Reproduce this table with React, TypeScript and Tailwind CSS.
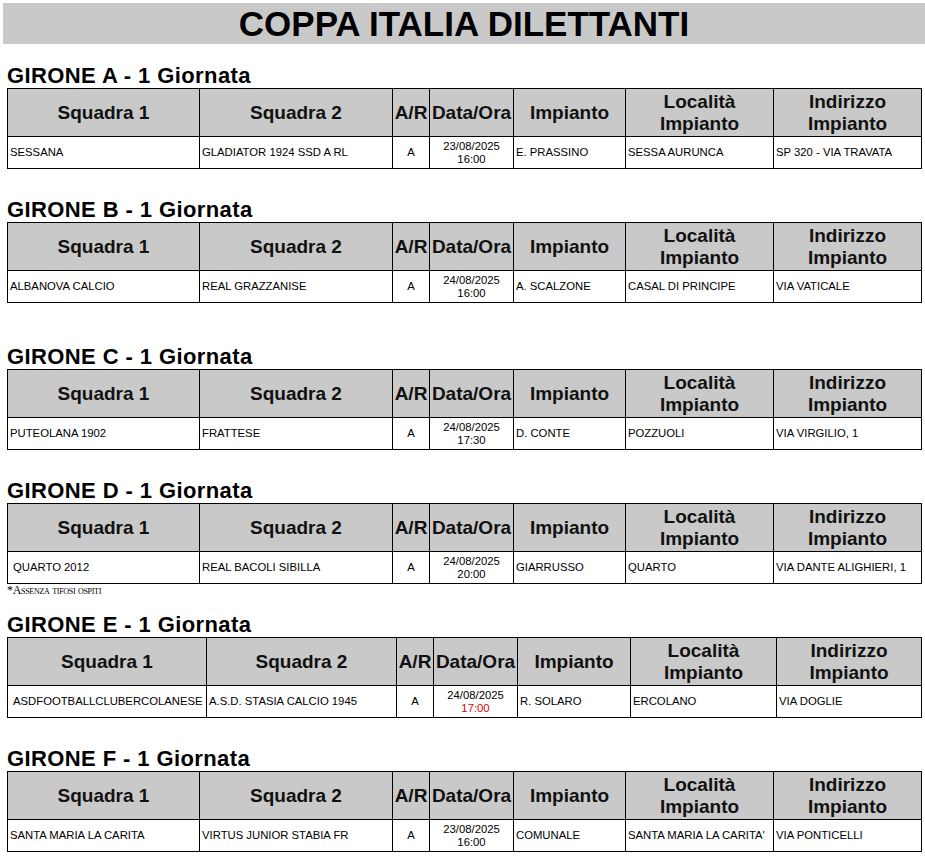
import React from "react";

type Match = {
  s1: string;
  s2: string;
  ar: string;
  date: string;
  time: string;
  imp: string;
  loc: string;
  ind: string;
};

type Girone = {
  name: string;
  cols: string;
  match: Match;
  firstPad: string;
  redTime?: boolean;
  note?: boolean;
  after: string;
};

const STD = "grid-cols-[192px_193px_37px_84px_112px_148px_148px]";
const WIDE = "grid-cols-[199px_190px_37px_84px_113px_146px_145px]";

const gironi: Girone[] = [
  {
    name: "GIRONE A - 1 Giornata",
    cols: STD,
    firstPad: "pl-[2px]",
    after: "mb-[29px]",
    match: {
      s1: "SESSANA",
      s2: "GLADIATOR 1924 SSD A RL",
      ar: "A",
      date: "23/08/2025",
      time: "16:00",
      imp: "E. PRASSINO",
      loc: "SESSA AURUNCA",
      ind: "SP 320 - VIA TRAVATA",
    },
  },
  {
    name: "GIRONE B - 1 Giornata",
    cols: STD,
    firstPad: "pl-[2px]",
    after: "mb-[42px]",
    match: {
      s1: "ALBANOVA CALCIO",
      s2: "REAL GRAZZANISE",
      ar: "A",
      date: "24/08/2025",
      time: "16:00",
      imp: "A. SCALZONE",
      loc: "CASAL DI PRINCIPE",
      ind: "VIA VATICALE",
    },
  },
  {
    name: "GIRONE C - 1 Giornata",
    cols: STD,
    firstPad: "pl-[2px]",
    after: "mb-[29px]",
    match: {
      s1: "PUTEOLANA 1902",
      s2: "FRATTESE",
      ar: "A",
      date: "24/08/2025",
      time: "17:30",
      imp: "D. CONTE",
      loc: "POZZUOLI",
      ind: "VIA VIRGILIO, 1",
    },
  },
  {
    name: "GIRONE D - 1 Giornata",
    cols: STD,
    firstPad: "pl-[5px]",
    note: true,
    after: "mb-[17px]",
    match: {
      s1: "QUARTO 2012",
      s2: "REAL BACOLI SIBILLA",
      ar: "A",
      date: "24/08/2025",
      time: "20:00",
      imp: "GIARRUSSO",
      loc: "QUARTO",
      ind: "VIA DANTE ALIGHIERI, 1",
    },
  },
  {
    name: "GIRONE E - 1 Giornata",
    cols: WIDE,
    firstPad: "pl-[5px]",
    redTime: true,
    after: "mb-[29px]",
    match: {
      s1: "ASDFOOTBALLCLUBERCOLANESE",
      s2: "A.S.D. STASIA CALCIO 1945",
      ar: "A",
      date: "24/08/2025",
      time: "17:00",
      imp: "R. SOLARO",
      loc: "ERCOLANO",
      ind: "VIA DOGLIE",
    },
  },
  {
    name: "GIRONE F - 1 Giornata",
    cols: STD,
    firstPad: "pl-[2px]",
    after: "mb-0",
    match: {
      s1: "SANTA MARIA LA CARITA",
      s2: "VIRTUS JUNIOR STABIA FR",
      ar: "A",
      date: "23/08/2025",
      time: "16:00",
      imp: "COMUNALE",
      loc: "SANTA MARIA LA CARITA'",
      ind: "VIA PONTICELLI",
    },
  },
];

const headCell =
  "h-[48px] border-r border-b border-black bg-[#c9c9c9] flex items-center justify-center text-center text-[19px] font-bold leading-[22px] text-[#111]";
const bodyCell =
  "h-[32px] border-r border-b border-black flex items-center text-[11.3px] leading-[13px] text-black whitespace-nowrap overflow-hidden";

function GironeTable({ g }: { g: Girone }) {
  const m = g.match;
  return (
    <div className={g.after}>
      <h2 className="h-[24px] pl-[7px] text-[22px] font-bold leading-[24px] tracking-[0.4px] text-black">
        {g.name}
      </h2>
      <div className={`ml-[7px] w-[915px] grid border-l border-t border-black ${g.cols}`}>
        <div className={headCell}>Squadra 1</div>
        <div className={headCell}>Squadra 2</div>
        <div className={headCell}>A/R</div>
        <div className={headCell}>Data/Ora</div>
        <div className={headCell}>Impianto</div>
        <div className={headCell}>
          Località
          <br />
          Impianto
        </div>
        <div className={headCell}>
          Indirizzo
          <br />
          Impianto
        </div>

        <div className={`${bodyCell} ${g.firstPad}`}>{m.s1}</div>
        <div className={`${bodyCell} pl-[2px]`}>{m.s2}</div>
        <div className={`${bodyCell} justify-center`}>{m.ar}</div>
        <div className={`${bodyCell} flex-col justify-center text-center`}>
          <span>{m.date}</span>
          <span className={g.redTime ? "text-[#e00000]" : ""}>{m.time}</span>
        </div>
        <div className={`${bodyCell} pl-[2px]`}>{m.imp}</div>
        <div className={`${bodyCell} pl-[2px]`}>{m.loc}</div>
        <div className={`${bodyCell} pl-[2px]`}>{m.ind}</div>
      </div>
      {g.note && (
        <div className="pl-[7px] pt-[1px] h-[12px] font-['Liberation_Serif',serif] text-[12px] leading-[11px] tracking-[-0.3px] [font-variant:small-caps] text-black">
          *Assenza tifosi ospiti
        </div>
      )}
    </div>
  );
}

export default function App() {
  return (
    <div className="w-[925px] min-h-[857px] bg-white pt-[3px] font-['Liberation_Sans',Arial,sans-serif]">
      <div className="ml-[3px] h-[41px] bg-[#c9c9c9] text-center text-[35px] font-bold leading-[41px] text-black">
        COPPA ITALIA DILETTANTI
      </div>
      <div className="h-[20px]" />
      {gironi.map((g) => (
        <GironeTable key={g.name} g={g} />
      ))}
    </div>
  );
}
